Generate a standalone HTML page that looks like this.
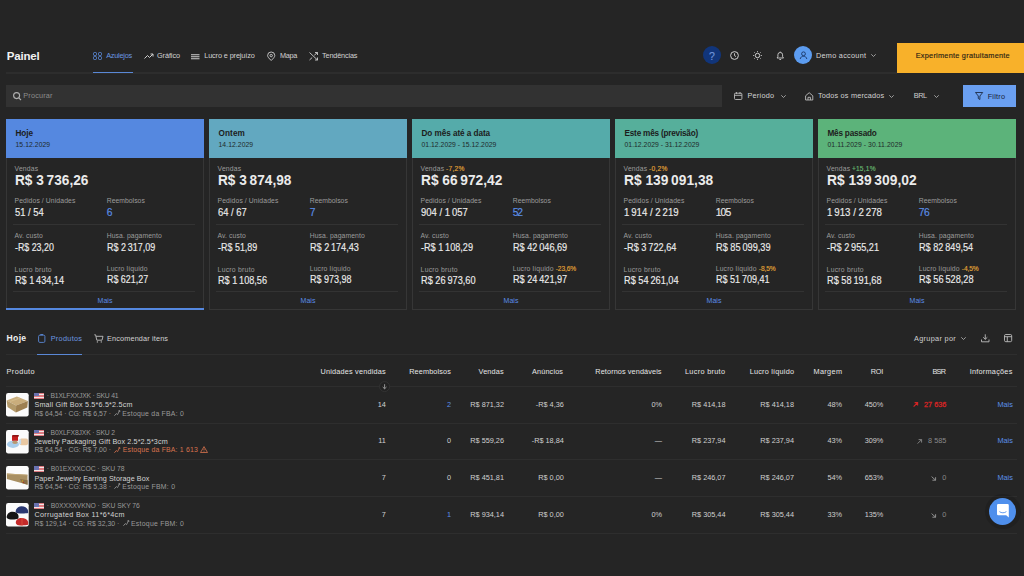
<!DOCTYPE html>
<html><head><meta charset="utf-8"><style>
html,body{margin:0;padding:0}
body{width:1024px;height:576px;overflow:hidden;position:relative;background:#252525;font-family:"Liberation Sans", sans-serif}
.t{position:absolute;white-space:nowrap}
svg{overflow:visible}
</style></head><body>
<div style="position:absolute;left:6px;top:72.2px;width:891px;height:1.5999999999999943px;background:#2d2d2d;"></div>
<div style="position:absolute;left:93px;top:71.8px;width:40px;height:1.6000000000000085px;background:#5a88d6;"></div>
<svg style="position:absolute;left:93px;top:52px;" width="9" height="8" viewBox="0 0 9 8" fill="none"><g stroke="#5a88d6" stroke-width="1"><rect x="0.5" y="0.5" width="3" height="3" rx="1"/><rect x="5.5" y="0.5" width="3" height="3" rx="1"/><rect x="0.5" y="4.5" width="3" height="3" rx="1"/><rect x="5.5" y="4.5" width="3" height="3" rx="1"/></g></svg>
<svg style="position:absolute;left:143.5px;top:53px;" width="9.5" height="6" viewBox="0 0 9.5 6" fill="none"><path d="M0.5 5.5 L3.5 2.5 L5.5 4.5 L9 1 M6.5 1 H9 V3.5" stroke="#cfcfcf" stroke-width="1"/></svg>
<svg style="position:absolute;left:191px;top:53.5px;" width="8.5" height="5.5" viewBox="0 0 8.5 5.5" fill="none"><path d="M0 0.75H8.5M0 2.75H8.5M0 4.75H8.5" stroke="#cfcfcf" stroke-width="1"/></svg>
<svg style="position:absolute;left:266.8px;top:51.6px;" width="8.4" height="9" viewBox="0 0 8.4 9" fill="none"><path d="M4.2 8.5 C2 6.3 0.6 4.9 0.6 3.6 A3.6 3.6 0 0 1 7.8 3.6 C7.8 4.9 6.4 6.3 4.2 8.5Z" stroke="#cfcfcf" stroke-width="0.9"/><circle cx="4.2" cy="3.6" r="1.2" stroke="#cfcfcf" stroke-width="0.9"/></svg>
<svg style="position:absolute;left:308.8px;top:52px;" width="9" height="8.5" viewBox="0 0 9 8.5" fill="none"><path d="M0.5 0.5 L8.5 8 M0.5 8 L3.2 5.5 M5.3 3.2 L8.5 0.5 M6 0.5 H8.5 V3 M6 8 H8.5 V5.5" stroke="#cfcfcf" stroke-width="0.9"/></svg>
<div style="position:absolute;left:703px;top:46px;width:18px;height:18px;border-radius:50%;background:#11357a"></div>
<svg style="position:absolute;left:730px;top:51px;" width="9" height="9" viewBox="0 0 9 9" fill="none"><circle cx="4.5" cy="4.5" r="3.9" stroke="#cfcfcf" stroke-width="1"/><path d="M4.5 2.3V4.6L6 5.6" stroke="#cfcfcf" stroke-width="0.9"/></svg>
<svg style="position:absolute;left:753px;top:50.6px;" width="9" height="9" viewBox="0 0 9 9" fill="none"><circle cx="4.5" cy="4.5" r="2.2" stroke="#cfcfcf" stroke-width="1"/><path d="M4.5 0V1.2M4.5 7.8V9M0 4.5H1.2M7.8 4.5H9M1.3 1.3L2.1 2.1M6.9 6.9L7.7 7.7M1.3 7.7L2.1 6.9M6.9 2.1L7.7 1.3" stroke="#cfcfcf" stroke-width="0.8"/></svg>
<svg style="position:absolute;left:776px;top:50.5px;" width="8.5" height="9.5" viewBox="0 0 8.5 9.5" fill="none"><path d="M1 7 H7.5 L6.6 5.8 V3.8 A2.35 2.35 0 0 0 1.9 3.8 V5.8Z" stroke="#cfcfcf" stroke-width="0.9"/><path d="M3.4 8.5 H5.1" stroke="#cfcfcf" stroke-width="0.9"/><path d="M4.25 0.6V1.4" stroke="#cfcfcf" stroke-width="0.9"/></svg>
<div style="position:absolute;left:793.5px;top:45.8px;width:18.5px;height:18.5px;border-radius:50%;background:#5c9cf0"></div>
<svg style="position:absolute;left:798.5px;top:50.5px;" width="9" height="9" viewBox="0 0 9 9" fill="none"><circle cx="4.5" cy="2.8" r="1.9" stroke="#1a3566" stroke-width="0.9"/><path d="M1.2 8 C1.6 5.9 3 5.3 4.5 5.3 C6 5.3 7.4 5.9 7.8 8" stroke="#1a3566" stroke-width="0.9"/></svg>
<svg style="position:absolute;left:871px;top:54px;" width="5" height="3" viewBox="0 0 5 3" fill="none"><path d="M0.3 0.3 L2.5 2.5 L4.7 0.3" stroke="#aaaaaa" stroke-width="0.9"/></svg>
<div style="position:absolute;left:897px;top:42.5px;width:127px;height:30.700000000000003px;background:#f8b12a;"></div>
<div style="position:absolute;left:6px;top:85px;width:716px;height:21.5px;background:#323232;"></div>
<svg style="position:absolute;left:12.8px;top:92px;" width="8.5" height="8" viewBox="0 0 8.5 8" fill="none"><circle cx="3.6" cy="3.6" r="3" stroke="#b0b0b0" stroke-width="1.1"/><path d="M5.8 5.8 L8 8" stroke="#b0b0b0" stroke-width="1.1"/></svg>
<svg style="position:absolute;left:734px;top:92.3px;" width="8.4" height="8" viewBox="0 0 8.4 8" fill="none"><rect x="0.5" y="1.2" width="7.4" height="6.3" rx="1" stroke="#bdbdbd" stroke-width="0.9"/><path d="M0.5 3.3H7.9M2.4 0V2M6 0V2" stroke="#bdbdbd" stroke-width="0.9"/></svg>
<svg style="position:absolute;left:781px;top:94.5px;" width="5" height="3" viewBox="0 0 5 3" fill="none"><path d="M0.3 0.3 L2.5 2.5 L4.7 0.3" stroke="#aaaaaa" stroke-width="0.9"/></svg>
<svg style="position:absolute;left:804.8px;top:91.8px;" width="8.4" height="8.5" viewBox="0 0 8.4 8.5" fill="none"><path d="M0.6 3.8 L4.2 0.7 L7.8 3.8 V8 H0.6Z M3 8 V5.3 H5.4 V8" stroke="#bdbdbd" stroke-width="0.9"/></svg>
<svg style="position:absolute;left:889px;top:94.5px;" width="5" height="3" viewBox="0 0 5 3" fill="none"><path d="M0.3 0.3 L2.5 2.5 L4.7 0.3" stroke="#aaaaaa" stroke-width="0.9"/></svg>
<svg style="position:absolute;left:934px;top:94.5px;" width="5" height="3" viewBox="0 0 5 3" fill="none"><path d="M0.3 0.3 L2.5 2.5 L4.7 0.3" stroke="#aaaaaa" stroke-width="0.9"/></svg>
<div style="position:absolute;left:963px;top:85px;width:53.200000000000045px;height:21.5px;background:#6a9ff0;"></div>
<svg style="position:absolute;left:974.6px;top:92.2px;" width="8.2" height="8" viewBox="0 0 8.2 8" fill="none"><path d="M0.5 0.5 H7.7 L4.9 4 V7.5 L3.3 6.5 V4Z" stroke="#1d2b45" stroke-width="0.9"/></svg>
<div style="position:absolute;left:6px;top:119px;width:198px;height:39px;background:#5588e0;"></div>
<div style="position:absolute;left:6px;top:158px;width:196px;height:150.5px;border:1px solid #363636;border-top:none"></div>
<div style="position:absolute;left:13.4px;top:223.8px;width:182.1px;height:1.0px;background:#333333;"></div>
<div style="position:absolute;left:13.4px;top:291.3px;width:182.1px;height:1.0px;background:#333333;"></div>
<div style="position:absolute;left:6px;top:307.5px;width:198px;height:2.0px;background:#5588e0;"></div>
<div style="position:absolute;left:209px;top:119px;width:198px;height:39px;background:#62a8c0;"></div>
<div style="position:absolute;left:209px;top:158px;width:196px;height:150.5px;border:1px solid #363636;border-top:none"></div>
<div style="position:absolute;left:216.4px;top:223.8px;width:182.1px;height:1.0px;background:#333333;"></div>
<div style="position:absolute;left:216.4px;top:291.3px;width:182.1px;height:1.0px;background:#333333;"></div>
<div style="position:absolute;left:412px;top:119px;width:198px;height:39px;background:#55abaa;"></div>
<div style="position:absolute;left:412px;top:158px;width:196px;height:150.5px;border:1px solid #363636;border-top:none"></div>
<div style="position:absolute;left:419.4px;top:223.8px;width:182.10000000000002px;height:1.0px;background:#333333;"></div>
<div style="position:absolute;left:419.4px;top:291.3px;width:182.10000000000002px;height:1.0px;background:#333333;"></div>
<div style="position:absolute;left:615px;top:119px;width:198px;height:39px;background:#56af9b;"></div>
<div style="position:absolute;left:615px;top:158px;width:196px;height:150.5px;border:1px solid #363636;border-top:none"></div>
<div style="position:absolute;left:622.4px;top:223.8px;width:182.10000000000002px;height:1.0px;background:#333333;"></div>
<div style="position:absolute;left:622.4px;top:291.3px;width:182.10000000000002px;height:1.0px;background:#333333;"></div>
<div style="position:absolute;left:818px;top:119px;width:198px;height:39px;background:#5cb37a;"></div>
<div style="position:absolute;left:818px;top:158px;width:196px;height:150.5px;border:1px solid #363636;border-top:none"></div>
<div style="position:absolute;left:825.4px;top:223.8px;width:182.10000000000002px;height:1.0px;background:#333333;"></div>
<div style="position:absolute;left:825.4px;top:291.3px;width:182.10000000000002px;height:1.0px;background:#333333;"></div>
<svg style="position:absolute;left:37.8px;top:334px;" width="7.5" height="9" viewBox="0 0 7.5 9" fill="none"><rect x="0.6" y="1.2" width="6.3" height="7.2" rx="1.2" stroke="#5a88d6" stroke-width="0.9"/><path d="M2.3 0.6 H5.2" stroke="#5a88d6" stroke-width="1"/></svg>
<svg style="position:absolute;left:93.5px;top:334px;" width="9.5" height="9" viewBox="0 0 9.5 9" fill="none"><path d="M0.3 0.8 H1.6 L2.8 6.2 H8 L9 2.3 H2.1" stroke="#bdbdbd" stroke-width="0.9"/><circle cx="3.4" cy="7.9" r="0.7" fill="#bdbdbd"/><circle cx="7.3" cy="7.9" r="0.7" fill="#bdbdbd"/></svg>
<svg style="position:absolute;left:960.5px;top:336.5px;" width="5" height="3" viewBox="0 0 5 3" fill="none"><path d="M0.3 0.3 L2.5 2.5 L4.7 0.3" stroke="#aaaaaa" stroke-width="0.9"/></svg>
<svg style="position:absolute;left:980.6px;top:334px;" width="8.5" height="8.5" viewBox="0 0 8.5 8.5" fill="none"><path d="M4.25 0.3 V5.3 M2.2 3.3 L4.25 5.3 L6.3 3.3 M0.5 5.5 V7.8 H8 V5.5" stroke="#bdbdbd" stroke-width="0.9"/></svg>
<svg style="position:absolute;left:1003.5px;top:334px;" width="8.2" height="8.2" viewBox="0 0 8.2 8.2" fill="none"><rect x="0.5" y="0.5" width="7.2" height="7.2" rx="1.3" stroke="#bdbdbd" stroke-width="0.9"/><path d="M0.5 2.7 H7.7 M3.3 2.7 V7.7" stroke="#bdbdbd" stroke-width="0.9"/></svg>
<div style="position:absolute;left:6px;top:354px;width:1010.5px;height:1px;background:#2e2e2e;"></div>
<div style="position:absolute;left:37px;top:353.7px;width:45px;height:1.6000000000000227px;background:#5a88d6;"></div>
<div style="position:absolute;left:6px;top:385.8px;width:1010.5px;height:1.0px;background:#2e2e2e;"></div>
<div style="position:absolute;left:6px;top:422.6px;width:1010.5px;height:1.0px;background:#2e2e2e;"></div>
<div style="position:absolute;left:6px;top:459.1px;width:1010.5px;height:1.0px;background:#2e2e2e;"></div>
<div style="position:absolute;left:6px;top:495.8px;width:1010.5px;height:1.0px;background:#2e2e2e;"></div>
<div style="position:absolute;left:6px;top:532.5px;width:1010.5px;height:1.0px;background:#2e2e2e;"></div>
<svg style="position:absolute;left:378.6px;top:380.9px;" width="11.2" height="11.2" viewBox="0 0 11.2 11.2" fill="none"><circle cx="5.6" cy="5.6" r="5" fill="#222222" stroke="#343434" stroke-width="0.9"/><path d="M5.6 3.2 V7.8 M3.7 6 L5.6 7.8 L7.5 6" stroke="#a0a0a0" stroke-width="0.9"/></svg>
<svg style="position:absolute;left:6px;top:392.90000000000003px;" width="22.7" height="23.5" viewBox="0 0 22.7 23.5" fill="none"><rect x="0" y="0" width="22.7" height="23.5" rx="2.2" fill="#fbfbfb"/><polygon points="0.6,7.4 10.9,3.6 21.9,8.1 10.1,12.6" fill="#c9ad7c"/><polygon points="0.6,7.4 10.1,12.6 9.9,19.4 1.5,14.1" fill="#b39a6a"/><polygon points="10.1,12.6 21.9,8.1 21.3,14.6 9.9,19.4" fill="#9e8052"/><path d="M4 8.5 L14 5" stroke="#d8c090" stroke-width="0.8"/></svg>
<div style="position:absolute;left:34.2px;top:393.10px;width:10.2px;height:6px;background:repeating-linear-gradient(#dd7a80 0 0.86px,#f3e6e6 0.86px 1.72px)"><div style="width:4.6px;height:3.4px;background:#6a72b0"></div></div>
<svg style="position:absolute;left:114.4px;top:409.90000000000003px;" width="6.2" height="6.4" viewBox="0 0 6.2 6.4" fill="none"><path d="M0.4 5.8 L2.3 3.6 L3.6 4.6 L5.6 0.6 M4.3 1 L5.7 0.5 L5.9 2" stroke="#9a9a9a" stroke-width="0.8" fill="none"/></svg>
<svg style="position:absolute;left:912.9px;top:401.90000000000003px;" width="5.4" height="5.2" viewBox="0 0 5.4 5.2" fill="none"><path d="M0.6 4.6 L4.6 0.6 M1.6 0.6 H4.6 V3.6" stroke="#d42424" stroke-width="1.2" fill="none"/></svg>
<svg style="position:absolute;left:6px;top:429.57000000000005px;" width="22.7" height="23.5" viewBox="0 0 22.7 23.5" fill="none"><rect x="0" y="0" width="22.7" height="23.5" rx="2.2" fill="#fbfbfb"/><ellipse cx="7" cy="14.3" rx="6" ry="3.6" fill="#a9cdeb"/><rect x="6" y="5.6" width="6" height="5.2" fill="#c41e1e"/><rect x="6.4" y="5" width="6.4" height="1.6" fill="#8b1515"/><ellipse cx="9" cy="12.3" rx="2.8" ry="1.6" fill="#b89870"/><rect x="13.6" y="8.6" width="8.4" height="6.6" rx="1.8" fill="#eac9a3"/><rect x="12.6" y="9.3" width="2.5" height="5" fill="#c8def0"/></svg>
<div style="position:absolute;left:34.2px;top:429.77px;width:10.2px;height:6px;background:repeating-linear-gradient(#dd7a80 0 0.86px,#f3e6e6 0.86px 1.72px)"><div style="width:4.6px;height:3.4px;background:#6a72b0"></div></div>
<svg style="position:absolute;left:114.4px;top:446.57000000000005px;" width="6.2" height="6.4" viewBox="0 0 6.2 6.4" fill="none"><path d="M0.4 5.8 L2.3 3.6 L3.6 4.6 L5.6 0.6 M4.3 1 L5.7 0.5 L5.9 2" stroke="#d9734e" stroke-width="0.8" fill="none"/></svg>
<svg style="position:absolute;left:199.6px;top:446.37px;" width="8" height="7" viewBox="0 0 8 7" fill="none"><path d="M4 0.6 L7.5 6.5 H0.5Z" stroke="#d9734e" stroke-width="0.8" fill="none"/><path d="M4 2.6 V4.4 M4 5.1 V5.7" stroke="#d9734e" stroke-width="0.8"/></svg>
<svg style="position:absolute;left:916.7px;top:438.57000000000005px;" width="5.4" height="5.2" viewBox="0 0 5.4 5.2" fill="none"><path d="M0.6 4.6 L4.6 0.6 M1.6 0.6 H4.6 V3.6" stroke="#8a8a8a" stroke-width="0.9" fill="none"/></svg>
<svg style="position:absolute;left:6px;top:466.24px;" width="22.7" height="23.5" viewBox="0 0 22.7 23.5" fill="none"><rect x="0" y="0" width="22.7" height="23.5" rx="2.2" fill="#fbfbfb"/><polygon points="0.9,7.4 21.5,8.7 21.6,18.8 0.9,13" fill="#a88f62"/><polygon points="0.9,7.4 21.5,8.7 21.5,9.6 0.9,8.4" fill="#c2a878"/><polygon points="14,13 21.6,14.2 21.6,18.8 16,17" fill="#8a7048"/><circle cx="16.5" cy="15" r="0.8" fill="#d8a020"/><circle cx="17.6" cy="16.4" r="0.6" fill="#b03020"/></svg>
<div style="position:absolute;left:34.2px;top:466.44px;width:10.2px;height:6px;background:repeating-linear-gradient(#dd7a80 0 0.86px,#f3e6e6 0.86px 1.72px)"><div style="width:4.6px;height:3.4px;background:#6a72b0"></div></div>
<svg style="position:absolute;left:114.4px;top:483.24px;" width="6.2" height="6.4" viewBox="0 0 6.2 6.4" fill="none"><path d="M0.4 5.8 L2.3 3.6 L3.6 4.6 L5.6 0.6 M4.3 1 L5.7 0.5 L5.9 2" stroke="#9a9a9a" stroke-width="0.8" fill="none"/></svg>
<svg style="position:absolute;left:930.8px;top:475.94px;" width="5.6" height="4.8" viewBox="0 0 5.6 4.8" fill="none"><path d="M0.6 0.6 L4.6 4.2 M1.4 4.2 H4.6 V1.2" stroke="#9a9a9a" stroke-width="0.9" fill="none"/></svg>
<svg style="position:absolute;left:6px;top:502.91px;" width="22.7" height="23.5" viewBox="0 0 22.7 23.5" fill="none"><rect x="0" y="0" width="22.7" height="23.5" rx="2.2" fill="#fbfbfb"/><path d="M9.6 8.6 C10 5 12.6 3.2 15.6 3.2 C18.8 3.2 21.4 5 22 7.4 L22.2 10 C20 10.5 16 10.6 12 10.3 C10.6 10.2 9.8 9.6 9.6 8.6Z" fill="#2a3872"/><path d="M0.6 14 C1 10.6 3.6 8.8 6.6 8.8 C9.6 8.8 12.2 10.4 12.6 13 L12.4 15.6 C10 16.6 6 16.8 3 16.2 C1.4 15.8 0.6 15 0.6 14Z" fill="#151515"/><path d="M9.8 19.4 C10 16.8 12.4 15 15.4 15 C18.8 15 21.6 16.6 22.2 19 L22.2 21.8 C19.6 22.4 15.6 22.6 12.6 22.2 C10.8 22 9.8 20.8 9.8 19.4Z" fill="#c42a2a"/><path d="M16 15 V22.4" stroke="#d84a3a" stroke-width="1"/></svg>
<div style="position:absolute;left:34.2px;top:503.11px;width:10.2px;height:6px;background:repeating-linear-gradient(#dd7a80 0 0.86px,#f3e6e6 0.86px 1.72px)"><div style="width:4.6px;height:3.4px;background:#6a72b0"></div></div>
<svg style="position:absolute;left:122.8px;top:519.91px;" width="6.2" height="6.4" viewBox="0 0 6.2 6.4" fill="none"><path d="M0.4 5.8 L2.3 3.6 L3.6 4.6 L5.6 0.6 M4.3 1 L5.7 0.5 L5.9 2" stroke="#9a9a9a" stroke-width="0.8" fill="none"/></svg>
<svg style="position:absolute;left:930.8px;top:512.61px;" width="5.6" height="4.8" viewBox="0 0 5.6 4.8" fill="none"><path d="M0.6 0.6 L4.6 4.2 M1.4 4.2 H4.6 V1.2" stroke="#9a9a9a" stroke-width="0.9" fill="none"/></svg>
<div style="position:absolute;left:985px;top:493.5px;width:35.5px;height:35.5px;border-radius:50%;background:rgba(0,0,0,0.12)"></div>
<div style="position:absolute;left:989.2px;top:497.7px;width:27.2px;height:27.2px;border-radius:50%;background:#4f8fec"></div>
<svg style="position:absolute;left:997.3px;top:504.4px;" width="11.8" height="13.4" viewBox="0 0 11.8 13.4" fill="none"><path d="M1.2 0 H10.6 A1.2 1.2 0 0 1 11.8 1.2 V13.4 L9.2 11.2 H1.2 A1.2 1.2 0 0 1 0 10 V1.2 A1.2 1.2 0 0 1 1.2 0Z" fill="#ffffff"/><path d="M2.4 7.6 C4.4 9.2 7.4 9.2 9.4 7.6" stroke="#4f8fec" stroke-width="0.9" fill="none"/></svg>
<div class="t" style="left:6.70px;top:50.10px;font-size:11.5px;line-height:13.225px;color:#f2f2f2;font-weight:bold;letter-spacing:-0.175px;">Painel</div>
<div class="t" style="left:106.20px;top:52.27px;font-size:7.3px;line-height:8.395px;color:#6b98e0;letter-spacing:-0.226px;">Azulejos</div>
<div class="t" style="left:157.00px;top:52.27px;font-size:7.3px;line-height:8.395px;color:#d2d2d2;letter-spacing:-0.086px;">Gráfico</div>
<div class="t" style="left:204.20px;top:52.27px;font-size:7.3px;line-height:8.395px;color:#d2d2d2;letter-spacing:-0.115px;">Lucro e prejuízo</div>
<div class="t" style="left:280.00px;top:52.27px;font-size:7.3px;line-height:8.395px;color:#d2d2d2;letter-spacing:-0.351px;">Mapa</div>
<div class="t" style="left:322.00px;top:52.27px;font-size:7.3px;line-height:8.395px;color:#d2d2d2;letter-spacing:-0.157px;">Tendências</div>
<div class="t" style="left:712.00px;transform:translateX(-50%);top:49.72px;font-size:10.5px;line-height:12.075px;color:#6f93d8;-webkit-text-stroke:0.15px currentColor;">?</div>
<div class="t" style="left:816.00px;top:51.87px;font-size:7.3px;line-height:8.395px;color:#d6d6d6;letter-spacing:0.268px;">Demo account</div>
<div class="t" style="left:915.70px;top:52.07px;font-size:7.3px;line-height:8.395px;color:#2a2214;letter-spacing:0.266px;-webkit-text-stroke:0.15px currentColor;">Experimente gratuitamente</div>
<div class="t" style="left:23.30px;top:91.87px;font-size:7.3px;line-height:8.395px;color:#8c8c8c;letter-spacing:0.174px;">Procurar</div>
<div class="t" style="left:747.60px;top:92.27px;font-size:7.3px;line-height:8.395px;color:#d2d2d2;letter-spacing:0.141px;">Período</div>
<div class="t" style="left:818.00px;top:92.27px;font-size:7.3px;line-height:8.395px;color:#d2d2d2;letter-spacing:0.183px;">Todos os mercados</div>
<div class="t" style="left:913.80px;top:92.27px;font-size:7.3px;line-height:8.395px;color:#cfcfcf;letter-spacing:-0.497px;">BRL</div>
<div class="t" style="left:987.70px;top:92.57px;font-size:7.3px;line-height:8.395px;color:#172238;letter-spacing:0.217px;">Filtro</div>
<div class="t" style="left:15.50px;top:129.44px;font-size:8.2px;line-height:9.430px;color:#1c1c1c;font-weight:bold;letter-spacing:-0.081px;">Hoje</div>
<div class="t" style="left:15.50px;top:141.23px;font-size:6.8px;line-height:7.820px;color:#1f2a2a;letter-spacing:0.065px;">15.12.2029</div>
<div class="t" style="left:14.60px;top:164.73px;font-size:6.8px;line-height:7.820px;color:#9c9c9c;letter-spacing:0.165px;">Vendas</div>
<div class="t" style="left:15.00px;top:172.58px;font-size:13.8px;line-height:15.870px;color:#ebebeb;font-weight:bold;transform:scaleX(0.9905);transform-origin:0 0;">R$ 3 736,26</div>
<div class="t" style="left:14.60px;top:196.73px;font-size:6.8px;line-height:7.820px;color:#9c9c9c;letter-spacing:0.103px;">Pedidos / Unidades</div>
<div class="t" style="left:106.70px;top:196.73px;font-size:6.8px;line-height:7.820px;color:#9c9c9c;letter-spacing:0.036px;">Reembolsos</div>
<div class="t" style="left:14.60px;top:206.81px;font-size:10.3px;line-height:11.845px;color:#ebebeb;transform:scaleX(0.9114);transform-origin:0 0;-webkit-text-stroke:0.15px currentColor;">51 / 54</div>
<div class="t" style="left:106.70px;top:206.81px;font-size:10.3px;line-height:11.845px;color:#5b8fe8;letter-spacing:-0.727px;-webkit-text-stroke:0.15px currentColor;">6</div>
<div class="t" style="left:14.60px;top:231.53px;font-size:6.8px;line-height:7.820px;color:#9c9c9c;letter-spacing:0.109px;">Av. custo</div>
<div class="t" style="left:106.70px;top:231.53px;font-size:6.8px;line-height:7.820px;color:#9c9c9c;letter-spacing:0.096px;">Husa. pagamento</div>
<div class="t" style="left:14.60px;top:241.51px;font-size:10.3px;line-height:11.845px;color:#ebebeb;transform:scaleX(0.8580);transform-origin:0 0;-webkit-text-stroke:0.15px currentColor;">-R$ 23,20</div>
<div class="t" style="left:106.70px;top:241.51px;font-size:10.3px;line-height:11.845px;color:#ebebeb;transform:scaleX(0.8733);transform-origin:0 0;-webkit-text-stroke:0.15px currentColor;">R$ 2 317,09</div>
<div class="t" style="left:14.60px;top:265.53px;font-size:6.8px;line-height:7.820px;color:#9c9c9c;letter-spacing:0.262px;">Lucro bruto</div>
<div class="t" style="left:106.70px;top:264.73px;font-size:6.8px;line-height:7.820px;color:#9c9c9c;letter-spacing:0.165px;">Lucro líquido</div>
<div class="t" style="left:14.60px;top:274.81px;font-size:10.3px;line-height:11.845px;color:#ebebeb;transform:scaleX(0.8860);transform-origin:0 0;-webkit-text-stroke:0.15px currentColor;">R$ 1 434,14</div>
<div class="t" style="left:106.70px;top:273.71px;font-size:10.3px;line-height:11.845px;color:#ebebeb;transform:scaleX(0.8649);transform-origin:0 0;-webkit-text-stroke:0.15px currentColor;">R$ 621,27</div>
<div class="t" style="left:105.00px;transform:translateX(-50%);top:296.55px;font-size:7px;line-height:8.050px;color:#5b8de8;">Mais</div>
<div class="t" style="left:218.50px;top:129.44px;font-size:8.2px;line-height:9.430px;color:#1c1c1c;font-weight:bold;letter-spacing:0.093px;">Ontem</div>
<div class="t" style="left:218.50px;top:141.23px;font-size:6.8px;line-height:7.820px;color:#1f2a2a;letter-spacing:0.065px;">14.12.2029</div>
<div class="t" style="left:217.60px;top:164.73px;font-size:6.8px;line-height:7.820px;color:#9c9c9c;letter-spacing:0.165px;">Vendas</div>
<div class="t" style="left:218.00px;top:172.58px;font-size:13.8px;line-height:15.870px;color:#ebebeb;font-weight:bold;transform:scaleX(0.9905);transform-origin:0 0;">R$ 3 874,98</div>
<div class="t" style="left:217.60px;top:196.73px;font-size:6.8px;line-height:7.820px;color:#9c9c9c;letter-spacing:0.103px;">Pedidos / Unidades</div>
<div class="t" style="left:309.70px;top:196.73px;font-size:6.8px;line-height:7.820px;color:#9c9c9c;letter-spacing:0.036px;">Reembolsos</div>
<div class="t" style="left:217.60px;top:206.81px;font-size:10.3px;line-height:11.845px;color:#ebebeb;transform:scaleX(0.9114);transform-origin:0 0;-webkit-text-stroke:0.15px currentColor;">64 / 67</div>
<div class="t" style="left:309.70px;top:206.81px;font-size:10.3px;line-height:11.845px;color:#5b8fe8;letter-spacing:-0.727px;-webkit-text-stroke:0.15px currentColor;">7</div>
<div class="t" style="left:217.60px;top:231.53px;font-size:6.8px;line-height:7.820px;color:#9c9c9c;letter-spacing:0.109px;">Av. custo</div>
<div class="t" style="left:309.70px;top:231.53px;font-size:6.8px;line-height:7.820px;color:#9c9c9c;letter-spacing:0.096px;">Husa. pagamento</div>
<div class="t" style="left:217.60px;top:241.51px;font-size:10.3px;line-height:11.845px;color:#ebebeb;transform:scaleX(0.8691);transform-origin:0 0;-webkit-text-stroke:0.15px currentColor;">-R$ 51,89</div>
<div class="t" style="left:309.70px;top:241.51px;font-size:10.3px;line-height:11.845px;color:#ebebeb;transform:scaleX(0.8824);transform-origin:0 0;-webkit-text-stroke:0.15px currentColor;">R$ 2 174,43</div>
<div class="t" style="left:217.60px;top:265.53px;font-size:6.8px;line-height:7.820px;color:#9c9c9c;letter-spacing:0.262px;">Lucro bruto</div>
<div class="t" style="left:309.70px;top:264.73px;font-size:6.8px;line-height:7.820px;color:#9c9c9c;letter-spacing:0.165px;">Lucro líquido</div>
<div class="t" style="left:217.60px;top:274.81px;font-size:10.3px;line-height:11.845px;color:#ebebeb;transform:scaleX(0.8860);transform-origin:0 0;-webkit-text-stroke:0.15px currentColor;">R$ 1 108,56</div>
<div class="t" style="left:309.70px;top:273.71px;font-size:10.3px;line-height:11.845px;color:#ebebeb;transform:scaleX(0.8734);transform-origin:0 0;-webkit-text-stroke:0.15px currentColor;">R$ 973,98</div>
<div class="t" style="left:308.00px;transform:translateX(-50%);top:296.55px;font-size:7px;line-height:8.050px;color:#5b8de8;">Mais</div>
<div class="t" style="left:421.50px;top:129.44px;font-size:8.2px;line-height:9.430px;color:#1c1c1c;font-weight:bold;letter-spacing:-0.064px;">Do mês até a data</div>
<div class="t" style="left:421.50px;top:141.23px;font-size:6.8px;line-height:7.820px;color:#1f2a2a;letter-spacing:0.033px;">01.12.2029 - 15.12.2029</div>
<div class="t" style="left:420.60px;top:164.73px;font-size:6.8px;line-height:7.820px;color:#9c9c9c;letter-spacing:0.165px;">Vendas</div>
<div class="t" style="left:445.90px;top:164.92px;font-size:6.6px;line-height:7.590px;color:#e2a436;letter-spacing:0.319px;-webkit-text-stroke:0.15px currentColor;">-7,2%</div>
<div class="t" style="left:421.00px;top:172.58px;font-size:13.8px;line-height:15.870px;color:#ebebeb;font-weight:bold;transform:scaleX(0.9942);transform-origin:0 0;">R$ 66 972,42</div>
<div class="t" style="left:420.60px;top:196.73px;font-size:6.8px;line-height:7.820px;color:#9c9c9c;letter-spacing:0.103px;">Pedidos / Unidades</div>
<div class="t" style="left:512.70px;top:196.73px;font-size:6.8px;line-height:7.820px;color:#9c9c9c;letter-spacing:0.036px;">Reembolsos</div>
<div class="t" style="left:420.60px;top:206.81px;font-size:10.3px;line-height:11.845px;color:#ebebeb;transform:scaleX(0.9206);transform-origin:0 0;-webkit-text-stroke:0.15px currentColor;">904 / 1 057</div>
<div class="t" style="left:512.70px;top:206.81px;font-size:10.3px;line-height:11.845px;color:#5b8fe8;letter-spacing:-1.053px;-webkit-text-stroke:0.15px currentColor;">52</div>
<div class="t" style="left:420.60px;top:231.53px;font-size:6.8px;line-height:7.820px;color:#9c9c9c;letter-spacing:0.109px;">Av. custo</div>
<div class="t" style="left:512.70px;top:231.53px;font-size:6.8px;line-height:7.820px;color:#9c9c9c;letter-spacing:0.096px;">Husa. pagamento</div>
<div class="t" style="left:420.60px;top:241.51px;font-size:10.3px;line-height:11.845px;color:#ebebeb;transform:scaleX(0.8853);transform-origin:0 0;-webkit-text-stroke:0.15px currentColor;">-R$ 1 108,29</div>
<div class="t" style="left:512.70px;top:241.51px;font-size:10.3px;line-height:11.845px;color:#ebebeb;transform:scaleX(0.8881);transform-origin:0 0;-webkit-text-stroke:0.15px currentColor;">R$ 42 046,69</div>
<div class="t" style="left:420.60px;top:265.53px;font-size:6.8px;line-height:7.820px;color:#9c9c9c;letter-spacing:0.262px;">Lucro bruto</div>
<div class="t" style="left:512.70px;top:264.73px;font-size:6.8px;line-height:7.820px;color:#9c9c9c;letter-spacing:0.165px;">Lucro líquido</div>
<div class="t" style="left:555.80px;top:264.92px;font-size:6.6px;line-height:7.590px;color:#e2a436;letter-spacing:-0.118px;-webkit-text-stroke:0.15px currentColor;">-23,6%</div>
<div class="t" style="left:420.60px;top:274.81px;font-size:10.3px;line-height:11.845px;color:#ebebeb;transform:scaleX(0.8946);transform-origin:0 0;-webkit-text-stroke:0.15px currentColor;">R$ 26 973,60</div>
<div class="t" style="left:512.70px;top:273.71px;font-size:10.3px;line-height:11.845px;color:#ebebeb;transform:scaleX(0.8881);transform-origin:0 0;-webkit-text-stroke:0.15px currentColor;">R$ 24 421,97</div>
<div class="t" style="left:511.00px;transform:translateX(-50%);top:296.55px;font-size:7px;line-height:8.050px;color:#5b8de8;">Mais</div>
<div class="t" style="left:624.50px;top:129.44px;font-size:8.2px;line-height:9.430px;color:#1c1c1c;font-weight:bold;letter-spacing:-0.203px;">Este mês (previsão)</div>
<div class="t" style="left:624.50px;top:141.23px;font-size:6.8px;line-height:7.820px;color:#1f2a2a;letter-spacing:0.033px;">01.12.2029 - 31.12.2029</div>
<div class="t" style="left:623.60px;top:164.73px;font-size:6.8px;line-height:7.820px;color:#9c9c9c;letter-spacing:0.165px;">Vendas</div>
<div class="t" style="left:648.90px;top:164.92px;font-size:6.6px;line-height:7.590px;color:#e2a436;letter-spacing:0.319px;-webkit-text-stroke:0.15px currentColor;">-0,2%</div>
<div class="t" style="left:624.00px;top:172.58px;font-size:13.8px;line-height:15.870px;color:#ebebeb;font-weight:bold;transform:scaleX(0.9972);transform-origin:0 0;">R$ 139 091,38</div>
<div class="t" style="left:623.60px;top:196.73px;font-size:6.8px;line-height:7.820px;color:#9c9c9c;letter-spacing:0.103px;">Pedidos / Unidades</div>
<div class="t" style="left:715.70px;top:196.73px;font-size:6.8px;line-height:7.820px;color:#9c9c9c;letter-spacing:0.036px;">Reembolsos</div>
<div class="t" style="left:623.60px;top:206.81px;font-size:10.3px;line-height:11.845px;color:#ebebeb;transform:scaleX(0.9330);transform-origin:0 0;-webkit-text-stroke:0.15px currentColor;">1 914 / 2 219</div>
<div class="t" style="left:715.70px;top:206.81px;font-size:10.3px;line-height:11.845px;color:#ebebeb;letter-spacing:-0.790px;-webkit-text-stroke:0.15px currentColor;">105</div>
<div class="t" style="left:623.60px;top:231.53px;font-size:6.8px;line-height:7.820px;color:#9c9c9c;letter-spacing:0.109px;">Av. custo</div>
<div class="t" style="left:715.70px;top:231.53px;font-size:6.8px;line-height:7.820px;color:#9c9c9c;letter-spacing:0.096px;">Husa. pagamento</div>
<div class="t" style="left:623.60px;top:241.51px;font-size:10.3px;line-height:11.845px;color:#ebebeb;transform:scaleX(0.8922);transform-origin:0 0;-webkit-text-stroke:0.15px currentColor;">-R$ 3 722,64</div>
<div class="t" style="left:715.70px;top:241.51px;font-size:10.3px;line-height:11.845px;color:#ebebeb;transform:scaleX(0.8946);transform-origin:0 0;-webkit-text-stroke:0.15px currentColor;">R$ 85 099,39</div>
<div class="t" style="left:623.60px;top:265.53px;font-size:6.8px;line-height:7.820px;color:#9c9c9c;letter-spacing:0.262px;">Lucro bruto</div>
<div class="t" style="left:715.70px;top:264.73px;font-size:6.8px;line-height:7.820px;color:#9c9c9c;letter-spacing:0.165px;">Lucro líquido</div>
<div class="t" style="left:758.80px;top:264.92px;font-size:6.6px;line-height:7.590px;color:#e2a436;letter-spacing:-0.081px;-webkit-text-stroke:0.15px currentColor;">-8,5%</div>
<div class="t" style="left:623.60px;top:274.81px;font-size:10.3px;line-height:11.845px;color:#ebebeb;transform:scaleX(0.8946);transform-origin:0 0;-webkit-text-stroke:0.15px currentColor;">R$ 54 261,04</div>
<div class="t" style="left:715.70px;top:273.71px;font-size:10.3px;line-height:11.845px;color:#ebebeb;transform:scaleX(0.8766);transform-origin:0 0;-webkit-text-stroke:0.15px currentColor;">R$ 51 709,41</div>
<div class="t" style="left:714.00px;transform:translateX(-50%);top:296.55px;font-size:7px;line-height:8.050px;color:#5b8de8;">Mais</div>
<div class="t" style="left:827.50px;top:129.44px;font-size:8.2px;line-height:9.430px;color:#1c1c1c;font-weight:bold;letter-spacing:-0.212px;">Mês passado</div>
<div class="t" style="left:827.50px;top:141.23px;font-size:6.8px;line-height:7.820px;color:#1f2a2a;letter-spacing:0.079px;">01.11.2029 - 30.11.2029</div>
<div class="t" style="left:826.60px;top:164.73px;font-size:6.8px;line-height:7.820px;color:#9c9c9c;letter-spacing:0.165px;">Vendas</div>
<div class="t" style="left:851.90px;top:164.92px;font-size:6.6px;line-height:7.590px;color:#67b86f;letter-spacing:0.231px;-webkit-text-stroke:0.15px currentColor;">+15,1%</div>
<div class="t" style="left:827.00px;top:172.58px;font-size:13.8px;line-height:15.870px;color:#ebebeb;font-weight:bold;transform:scaleX(1.0017);transform-origin:0 0;">R$ 139 309,02</div>
<div class="t" style="left:826.60px;top:196.73px;font-size:6.8px;line-height:7.820px;color:#9c9c9c;letter-spacing:0.103px;">Pedidos / Unidades</div>
<div class="t" style="left:918.70px;top:196.73px;font-size:6.8px;line-height:7.820px;color:#9c9c9c;letter-spacing:0.036px;">Reembolsos</div>
<div class="t" style="left:826.60px;top:206.81px;font-size:10.3px;line-height:11.845px;color:#ebebeb;transform:scaleX(0.9399);transform-origin:0 0;-webkit-text-stroke:0.15px currentColor;">1 913 / 2 278</div>
<div class="t" style="left:918.70px;top:206.81px;font-size:10.3px;line-height:11.845px;color:#5b8fe8;letter-spacing:-0.453px;-webkit-text-stroke:0.15px currentColor;">76</div>
<div class="t" style="left:826.60px;top:231.53px;font-size:6.8px;line-height:7.820px;color:#9c9c9c;letter-spacing:0.109px;">Av. custo</div>
<div class="t" style="left:918.70px;top:231.53px;font-size:6.8px;line-height:7.820px;color:#9c9c9c;letter-spacing:0.096px;">Husa. pagamento</div>
<div class="t" style="left:826.60px;top:241.51px;font-size:10.3px;line-height:11.845px;color:#ebebeb;transform:scaleX(0.8853);transform-origin:0 0;-webkit-text-stroke:0.15px currentColor;">-R$ 2 955,21</div>
<div class="t" style="left:918.70px;top:241.51px;font-size:10.3px;line-height:11.845px;color:#ebebeb;transform:scaleX(0.8881);transform-origin:0 0;-webkit-text-stroke:0.15px currentColor;">R$ 82 849,54</div>
<div class="t" style="left:826.60px;top:265.53px;font-size:6.8px;line-height:7.820px;color:#9c9c9c;letter-spacing:0.262px;">Lucro bruto</div>
<div class="t" style="left:918.70px;top:264.73px;font-size:6.8px;line-height:7.820px;color:#9c9c9c;letter-spacing:0.165px;">Lucro líquido</div>
<div class="t" style="left:961.80px;top:264.92px;font-size:6.6px;line-height:7.590px;color:#e2a436;letter-spacing:-0.081px;-webkit-text-stroke:0.15px currentColor;">-4,5%</div>
<div class="t" style="left:826.60px;top:274.81px;font-size:10.3px;line-height:11.845px;color:#ebebeb;transform:scaleX(0.8946);transform-origin:0 0;-webkit-text-stroke:0.15px currentColor;">R$ 58 191,68</div>
<div class="t" style="left:918.70px;top:273.71px;font-size:10.3px;line-height:11.845px;color:#ebebeb;transform:scaleX(0.8946);transform-origin:0 0;-webkit-text-stroke:0.15px currentColor;">R$ 56 528,28</div>
<div class="t" style="left:917.00px;transform:translateX(-50%);top:296.55px;font-size:7px;line-height:8.050px;color:#5b8de8;">Mais</div>
<div class="t" style="left:6.60px;top:334.08px;font-size:8.6px;line-height:9.890px;color:#f0f0f0;font-weight:bold;letter-spacing:0.292px;">Hoje</div>
<div class="t" style="left:50.70px;top:335.27px;font-size:7.3px;line-height:8.395px;color:#6b98e0;letter-spacing:0.299px;">Produtos</div>
<div class="t" style="left:107.00px;top:335.27px;font-size:7.3px;line-height:8.395px;color:#d2d2d2;letter-spacing:0.146px;">Encomendar itens</div>
<div class="t" style="left:914.00px;top:335.27px;font-size:7.3px;line-height:8.395px;color:#cfcfcf;letter-spacing:0.317px;">Agrupar por</div>
<div class="t" style="left:6.60px;top:367.87px;font-size:7.3px;line-height:8.395px;color:#e6e6e6;letter-spacing:0.407px;">Produto</div>
<div class="t" style="right:638.22px;top:367.87px;font-size:7.3px;line-height:8.395px;color:#e6e6e6;letter-spacing:0.183px;">Unidades vendidas</div>
<div class="t" style="right:573.08px;top:367.87px;font-size:7.3px;line-height:8.395px;color:#e6e6e6;letter-spacing:0.116px;">Reembolsos</div>
<div class="t" style="right:520.13px;top:367.87px;font-size:7.3px;line-height:8.395px;color:#e6e6e6;letter-spacing:0.171px;">Vendas</div>
<div class="t" style="right:460.86px;top:367.87px;font-size:7.3px;line-height:8.395px;color:#e6e6e6;letter-spacing:0.140px;">Anúncios</div>
<div class="t" style="right:362.40px;top:367.87px;font-size:7.3px;line-height:8.395px;color:#e6e6e6;letter-spacing:0.100px;">Retornos vendáveis</div>
<div class="t" style="right:298.69px;top:367.87px;font-size:7.3px;line-height:8.395px;color:#e6e6e6;letter-spacing:0.309px;">Lucro bruto</div>
<div class="t" style="right:229.79px;top:367.87px;font-size:7.3px;line-height:8.395px;color:#e6e6e6;letter-spacing:0.210px;">Lucro líquido</div>
<div class="t" style="right:181.65px;top:367.87px;font-size:7.3px;line-height:8.395px;color:#e6e6e6;letter-spacing:0.348px;">Margem</div>
<div class="t" style="right:140.89px;top:367.87px;font-size:7.3px;line-height:8.395px;color:#e6e6e6;letter-spacing:-0.186px;">ROI</div>
<div class="t" style="right:78.70px;top:367.87px;font-size:7.3px;line-height:8.395px;color:#e6e6e6;letter-spacing:-0.702px;">BSR</div>
<div class="t" style="right:11.46px;top:367.87px;font-size:7.3px;line-height:8.395px;color:#e6e6e6;letter-spacing:0.245px;">Informações</div>
<div class="t" style="left:46.80px;top:391.93px;font-size:6.8px;line-height:7.820px;color:#9a9a9a;letter-spacing:-0.206px;">· B1XLFXXJXK · SKU 41</div>
<div class="t" style="left:34.40px;top:401.37px;font-size:7.2px;line-height:8.280px;color:#d4d4d4;letter-spacing:0.201px;">Small Gift Box 5.5*6.5*2.5cm</div>
<div class="t" style="left:34.40px;top:409.64px;font-size:6.9px;line-height:7.935px;color:#9a9a9a;">R$ 64,54 · CG: R$ 6,57 ·</div>
<div class="t" style="left:122.30px;top:409.64px;font-size:6.9px;line-height:7.935px;color:#9a9a9a;letter-spacing:0.229px;">Estoque da FBA: 0</div>
<div class="t" style="right:638.20px;top:400.77px;font-size:7.3px;line-height:8.395px;color:#d0d0d0;">14</div>
<div class="t" style="right:573.00px;top:400.77px;font-size:7.3px;line-height:8.395px;color:#5b8fe8;">2</div>
<div class="t" style="right:520.00px;top:400.77px;font-size:7.3px;line-height:8.395px;color:#d0d0d0;">R$ 871,32</div>
<div class="t" style="right:460.20px;top:400.77px;font-size:7.3px;line-height:8.395px;color:#d0d0d0;">-R$ 4,36</div>
<div class="t" style="right:362.00px;top:400.77px;font-size:7.3px;line-height:8.395px;color:#d0d0d0;">0%</div>
<div class="t" style="right:298.50px;top:400.77px;font-size:7.3px;line-height:8.395px;color:#d0d0d0;">R$ 414,18</div>
<div class="t" style="right:230.00px;top:400.77px;font-size:7.3px;line-height:8.395px;color:#d0d0d0;">R$ 414,18</div>
<div class="t" style="right:182.00px;top:400.77px;font-size:7.3px;line-height:8.395px;color:#d0d0d0;">48%</div>
<div class="t" style="right:140.70px;top:400.77px;font-size:7.3px;line-height:8.395px;color:#d0d0d0;">450%</div>
<div class="t" style="right:77.70px;top:400.77px;font-size:7.3px;line-height:8.395px;color:#d42424;-webkit-text-stroke:0.15px currentColor;-webkit-text-stroke-width:0.3px;">27 636</div>
<div class="t" style="right:11.20px;top:400.77px;font-size:7.3px;line-height:8.395px;color:#5b8fe8;">Mais</div>
<div class="t" style="left:46.80px;top:428.60px;font-size:6.8px;line-height:7.820px;color:#9a9a9a;letter-spacing:-0.168px;">· B0XLFX8JXK · SKU 2</div>
<div class="t" style="left:34.40px;top:438.04px;font-size:7.2px;line-height:8.280px;color:#d4d4d4;letter-spacing:0.126px;">Jewelry Packaging Gift Box 2.5*2.5*3cm</div>
<div class="t" style="left:34.40px;top:446.31px;font-size:6.9px;line-height:7.935px;color:#9a9a9a;">R$ 64,54 · CG: R$ 7,00 ·</div>
<div class="t" style="left:122.80px;top:446.31px;font-size:6.9px;line-height:7.935px;color:#d9734e;letter-spacing:0.187px;">Estoque da FBA: 1 613</div>
<div class="t" style="right:638.20px;top:437.44px;font-size:7.3px;line-height:8.395px;color:#d0d0d0;">11</div>
<div class="t" style="right:573.00px;top:437.44px;font-size:7.3px;line-height:8.395px;color:#d0d0d0;">0</div>
<div class="t" style="right:520.00px;top:437.44px;font-size:7.3px;line-height:8.395px;color:#d0d0d0;">R$ 559,26</div>
<div class="t" style="right:460.20px;top:437.44px;font-size:7.3px;line-height:8.395px;color:#d0d0d0;">-R$ 18,84</div>
<div class="t" style="right:362.00px;top:437.44px;font-size:7.3px;line-height:8.395px;color:#d0d0d0;">—</div>
<div class="t" style="right:298.50px;top:437.44px;font-size:7.3px;line-height:8.395px;color:#d0d0d0;">R$ 237,94</div>
<div class="t" style="right:230.00px;top:437.44px;font-size:7.3px;line-height:8.395px;color:#d0d0d0;">R$ 237,94</div>
<div class="t" style="right:182.00px;top:437.44px;font-size:7.3px;line-height:8.395px;color:#d0d0d0;">43%</div>
<div class="t" style="right:140.70px;top:437.44px;font-size:7.3px;line-height:8.395px;color:#d0d0d0;">309%</div>
<div class="t" style="right:77.70px;top:437.44px;font-size:7.3px;line-height:8.395px;color:#8a8a8a;">8 585</div>
<div class="t" style="right:11.20px;top:437.44px;font-size:7.3px;line-height:8.395px;color:#5b8fe8;">Mais</div>
<div class="t" style="left:46.80px;top:465.27px;font-size:6.8px;line-height:7.820px;color:#9a9a9a;letter-spacing:-0.062px;">· B01EXXXCOC · SKU 78</div>
<div class="t" style="left:34.40px;top:474.71px;font-size:7.2px;line-height:8.280px;color:#d4d4d4;letter-spacing:0.086px;">Paper Jewelry Earring Storage Box</div>
<div class="t" style="left:34.40px;top:482.98px;font-size:6.9px;line-height:7.935px;color:#9a9a9a;">R$ 64,54 · CG: R$ 5,38 ·</div>
<div class="t" style="left:122.30px;top:482.98px;font-size:6.9px;line-height:7.935px;color:#9a9a9a;letter-spacing:0.253px;">Estoque FBM: 0</div>
<div class="t" style="right:638.20px;top:474.11px;font-size:7.3px;line-height:8.395px;color:#d0d0d0;">7</div>
<div class="t" style="right:573.00px;top:474.11px;font-size:7.3px;line-height:8.395px;color:#d0d0d0;">0</div>
<div class="t" style="right:520.00px;top:474.11px;font-size:7.3px;line-height:8.395px;color:#d0d0d0;">R$ 451,81</div>
<div class="t" style="right:460.20px;top:474.11px;font-size:7.3px;line-height:8.395px;color:#d0d0d0;">R$ 0,00</div>
<div class="t" style="right:362.00px;top:474.11px;font-size:7.3px;line-height:8.395px;color:#d0d0d0;">—</div>
<div class="t" style="right:298.50px;top:474.11px;font-size:7.3px;line-height:8.395px;color:#d0d0d0;">R$ 246,07</div>
<div class="t" style="right:230.00px;top:474.11px;font-size:7.3px;line-height:8.395px;color:#d0d0d0;">R$ 246,07</div>
<div class="t" style="right:182.00px;top:474.11px;font-size:7.3px;line-height:8.395px;color:#d0d0d0;">54%</div>
<div class="t" style="right:140.70px;top:474.11px;font-size:7.3px;line-height:8.395px;color:#d0d0d0;">653%</div>
<div class="t" style="right:77.70px;top:474.11px;font-size:7.3px;line-height:8.395px;color:#8a8a8a;">0</div>
<div class="t" style="right:11.20px;top:474.11px;font-size:7.3px;line-height:8.395px;color:#5b8fe8;">Mais</div>
<div class="t" style="left:46.80px;top:501.94px;font-size:6.8px;line-height:7.820px;color:#9a9a9a;letter-spacing:-0.071px;">· B0XXXXVKNO · SKU SKY 76</div>
<div class="t" style="left:34.40px;top:511.38px;font-size:7.2px;line-height:8.280px;color:#d4d4d4;letter-spacing:0.324px;">Corrugated Box 11*6*4cm</div>
<div class="t" style="left:34.40px;top:519.65px;font-size:6.9px;line-height:7.935px;color:#9a9a9a;letter-spacing:0.030px;">R$ 129,14 · CG: R$ 32,30 ·</div>
<div class="t" style="left:131.00px;top:519.65px;font-size:6.9px;line-height:7.935px;color:#9a9a9a;letter-spacing:0.261px;">Estoque FBM: 0</div>
<div class="t" style="right:638.20px;top:510.78px;font-size:7.3px;line-height:8.395px;color:#d0d0d0;">7</div>
<div class="t" style="right:573.00px;top:510.78px;font-size:7.3px;line-height:8.395px;color:#5b8fe8;">1</div>
<div class="t" style="right:520.00px;top:510.78px;font-size:7.3px;line-height:8.395px;color:#d0d0d0;">R$ 934,14</div>
<div class="t" style="right:460.20px;top:510.78px;font-size:7.3px;line-height:8.395px;color:#d0d0d0;">R$ 0,00</div>
<div class="t" style="right:362.00px;top:510.78px;font-size:7.3px;line-height:8.395px;color:#d0d0d0;">0%</div>
<div class="t" style="right:298.50px;top:510.78px;font-size:7.3px;line-height:8.395px;color:#d0d0d0;">R$ 305,44</div>
<div class="t" style="right:230.00px;top:510.78px;font-size:7.3px;line-height:8.395px;color:#d0d0d0;">R$ 305,44</div>
<div class="t" style="right:182.00px;top:510.78px;font-size:7.3px;line-height:8.395px;color:#d0d0d0;">33%</div>
<div class="t" style="right:140.70px;top:510.78px;font-size:7.3px;line-height:8.395px;color:#d0d0d0;">135%</div>
<div class="t" style="right:77.70px;top:510.78px;font-size:7.3px;line-height:8.395px;color:#8a8a8a;">0</div>
</body></html>
